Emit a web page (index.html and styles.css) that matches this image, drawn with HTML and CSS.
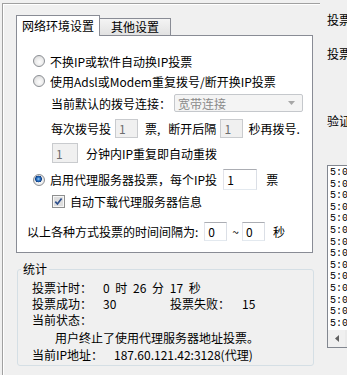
FILE: index.html
```html
<!DOCTYPE html>
<html lang="zh-CN">
<head>
  <meta charset="UTF-8" />
  <title>投票设置</title>
  <link rel="stylesheet" href="styles.css">
</head>
<body>
<div class="win">

  <div class="pane">
    <div class="tabs">
      <div class="tab on">网络环境设置</div>
      <div class="tab">其他设置</div>
    </div>

    <div class="page">
      <div class="row opt r1"><span class="radio"></span>不换IP或软件自动换IP投票</div>
      <div class="row opt r2"><span class="radio"></span>使用Adsl或Modem重复拨号/断开换IP投票</div>
      <div class="row sub r3">当前默认的拨号连接：
        <div class="combo">宽带连接
          <svg class="arrow" width="7" height="4" viewBox="0 0 7 4"><path d="M0 0h7L3.5 4z" fill="#a7a7a7"/></svg>
        </div>
      </div>
      <div class="row sub r4">
        每次拨号投<span class="edit off e1">1</span><span class="t1">票,</span><span class="t2">断开后隔</span><span class="edit off e2">1</span><span class="t3">秒再拨号.</span>
      </div>
      <div class="row r5">
        <span class="edit off e3">1</span><span class="t4">分钟内IP重复即自动重拨</span>
      </div>
      <div class="row opt r6">
        <span class="radio checked"></span>启用代理服务器投票，每个IP投<span class="edit e4">1</span><span class="t5">票</span>
      </div>
      <div class="row r7">
        <svg class="chk" width="13" height="13" viewBox="0 0 13 13">
          <rect x="0.5" y="0.5" width="12" height="12" fill="#f6f6f6" stroke="#8e8f8f"/>
          <rect x="2" y="2" width="9" height="9" fill="#dedede"/>
          <path d="M3.3 6.6L5.4 9L9.6 3.4" fill="none" stroke="#2e4f8c" stroke-width="1.7"/>
        </svg>
        <span class="t6">自动下载代理服务器信息</span>
      </div>
      <div class="row r8">
        以上各种方式投票的时间间隔为:<span class="edit e5">0</span><span class="t7">~</span><span class="edit e6">0</span><span class="t8">秒</span>
      </div>
    </div>

    <fieldset class="stats">
      <legend>统计</legend>
      <div class="st"><span class="k">投票计时：</span><span class="time">0 时 26 分 17 秒</span></div>
      <div class="st"><span class="k">投票成功：</span><span class="v">30</span><span class="k2">投票失败：</span>15</div>
      <div class="st">当前状态：</div>
      <div class="st msg">用户终止了使用代理服务器地址投票。</div>
      <div class="st ip"><span class="k">当前IP地址：</span>187.60.121.42:3128(代理)</div>
    </fieldset>
  </div>

  <div class="side">
    <div class="lbl">投票</div>
    <div class="lbl l2">投票</div>
    <div class="lbl l3">验证</div>
    <div class="list">
      <div class="items">
        <div>5:02</div>
        <div>5:02</div>
        <div>5:02</div>
        <div>5:02</div>
        <div>5:02</div>
        <div>5:02</div>
        <div>5:02</div>
        <div>5:02</div>
        <div>5:02</div>
        <div>5:02</div>
        <div>5:03</div>
        <div>5:03</div>
        <div>5:03</div>
        <div>5:03</div>
      </div>
      <div class="hscroll">
        <div class="sbtn">
          <svg width="4" height="7" viewBox="0 0 4 7"><path d="M4 0v7L0 3.5z" fill="#606060"/></svg>
        </div>
      </div>
    </div>
  </div>

</div>
</body>
</html>
```

FILE: styles.css
```css
body {
  margin: 0;
  width: 347px;
  height: 375px;
  overflow: hidden;
  background: #f0f0f0;
  font-family: "Noto Sans CJK SC", sans-serif;
  font-size: 12px;
  color: #000;
}

.win {
  display: flex;
  height: 375px;
}

/* left area with tabs and stats */
.pane {
  flex: none;
  width: 318px;
  box-sizing: border-box;
  margin: 3px 0 0 2px;
  padding: 11px 0 0 13px;
  border-left: 1px solid #a0a0a0;
  border-top: 1px solid #a0a0a0;
  box-shadow: inset 1px 1px 0 #fff;
}

.tabs {
  display: flex;
  align-items: flex-end;
  height: 20px;
}

.tab {
  box-sizing: border-box;
  width: 71px;
  height: 17px;
  line-height: 16px;
  text-align: center;
  border: 1px solid #898c95;
  border-bottom: none;
  border-left: none;
  background: linear-gradient(#f4f4f4, #e2e2e2);
}

.tab.on {
  position: relative;
  z-index: 1;
  width: 84px;
  height: 21px;
  line-height: 19px;
  margin-bottom: -1px;
  border-left: 1px solid #898c95;
  background: #fff;
}

.page {
  box-sizing: border-box;
  width: 297px;
  height: 218px;
  padding-top: 15px;
  border: 1px solid #898c95;
  background: #fff;
}

.row {
  display: flex;
  align-items: center;
  height: 20px;
  white-space: nowrap;
}

.opt { padding-left: 16px; }
.sub { padding-left: 34px; }

.r3 { margin-top: 3px; height: 18px; }
.r4 { margin-top: 7px; height: 19px; }
.r5 { margin-top: 5px; height: 20px; padding-left: 35px; }
.r6 { margin-top: 6px; height: 21px; }
.r7 { margin-top: 3px; height: 16px; padding-left: 35px; }
.r8 { margin-top: 13px; height: 19px; padding-left: 10px; }

.radio {
  flex: none;
  box-sizing: border-box;
  width: 12px;
  height: 12px;
  margin-right: 5px;
  border-radius: 50%;
  border: 1px solid #8c8f94;
  background: radial-gradient(circle at 55% 60%, #fdfdfd 0, #ececec 45%, #cfcfcf 100%);
}

.radio.checked {
  background:
    radial-gradient(circle at 45% 40%, #9fd0f5 0, #2f78c8 1.6px, #0f3f86 3.2px, transparent 3.6px),
    radial-gradient(circle at 55% 60%, #fdfdfd 0, #ececec 45%, #cfcfcf 100%);
}

.chk { flex: none; }

.combo {
  box-sizing: border-box;
  display: flex;
  align-items: center;
  justify-content: space-between;
  width: 129px;
  height: 18px;
  margin-left: 3px;
  padding: 0 7px 0 3px;
  border: 1px solid #c5c8cc;
  border-radius: 2px;
  background: #f4f4f4;
  color: #8a8a8a;
}

.edit {
  box-sizing: border-box;
  display: flex;
  align-items: center;
  height: 100%;
  padding-left: 3px;
  border: 1px solid #abadb3;
  border-color: #abadb3 #dbdfe6 #e3e9ef #e2e3ea;
  background: #fff;
}

.edit.off {
  border: 1px solid #c9cbce;
  background: #f0f0f0;
  color: #6d6d6d;
}

.e1 { width: 23px; margin-left: 4px; }
.t1 { margin-left: 7px; }
.t2 { margin-left: 8px; }
.e2 { width: 23px; margin-left: 4px; }
.t3 { margin-left: 5px; }
.e3 { width: 26px; }
.t4 { margin-left: 8px; }
.e4 { width: 34px; margin-left: 6px; }
.t5 { margin-left: 9px; }
.t6 { margin-left: 5px; }
.e5 { width: 23px; margin-left: 6px; }
.t7 { margin-left: 5px; }
.e6 { width: 23px; margin-left: 3px; }
.t8 { margin-left: 8px; }

/* statistics group */
.stats {
  box-sizing: border-box;
  width: 297px;
  margin: 10px 0 0 1px;
  padding: 4px 0 3px 3px;
  border: 1px solid #d5dfe5;
  border-radius: 3px;
}

.stats legend {
  padding: 0 2px;
  line-height: 12px;
}

.st {
  display: flex;
  align-items: center;
  height: 16px;
  padding-left: 11px;
  white-space: nowrap;
}

.st .k { width: 71px; }
.st .v { width: 67px; }
.st .k2 { width: 72px; }
.st .time { word-spacing: 3px; }

.msg { margin-top: 2px; padding-left: 34px; }
.ip { margin-top: 1px; }
.ip .k { width: 82px; }

/* right side, mostly cut off */
.side {
  flex: none;
  width: 27px;
  padding: 12px 0 0 7px;
  overflow: hidden;
  white-space: nowrap;
}

.lbl {
  height: 16px;
  line-height: 16px;
}

.l2 { margin-top: 18px; }
.l3 { margin-top: 51px; }

.list {
  box-sizing: border-box;
  display: flex;
  flex-direction: column;
  width: 40px;
  height: 183px;
  margin-top: 36px;
  border: 1px solid #828790;
  border-right: none;
  background: #fff;
}

.items {
  flex: 1;
  overflow: hidden;
  padding: 1px 0 0 2px;
  font-family: "Liberation Mono", monospace;
  font-size: 10px;
  line-height: 11.6px;
}

.hscroll {
  height: 17px;
  background: #eaeaea;
}

.sbtn {
  display: flex;
  align-items: center;
  justify-content: center;
  width: 17px;
  height: 17px;
  background: #f0f0f0;
}
```
